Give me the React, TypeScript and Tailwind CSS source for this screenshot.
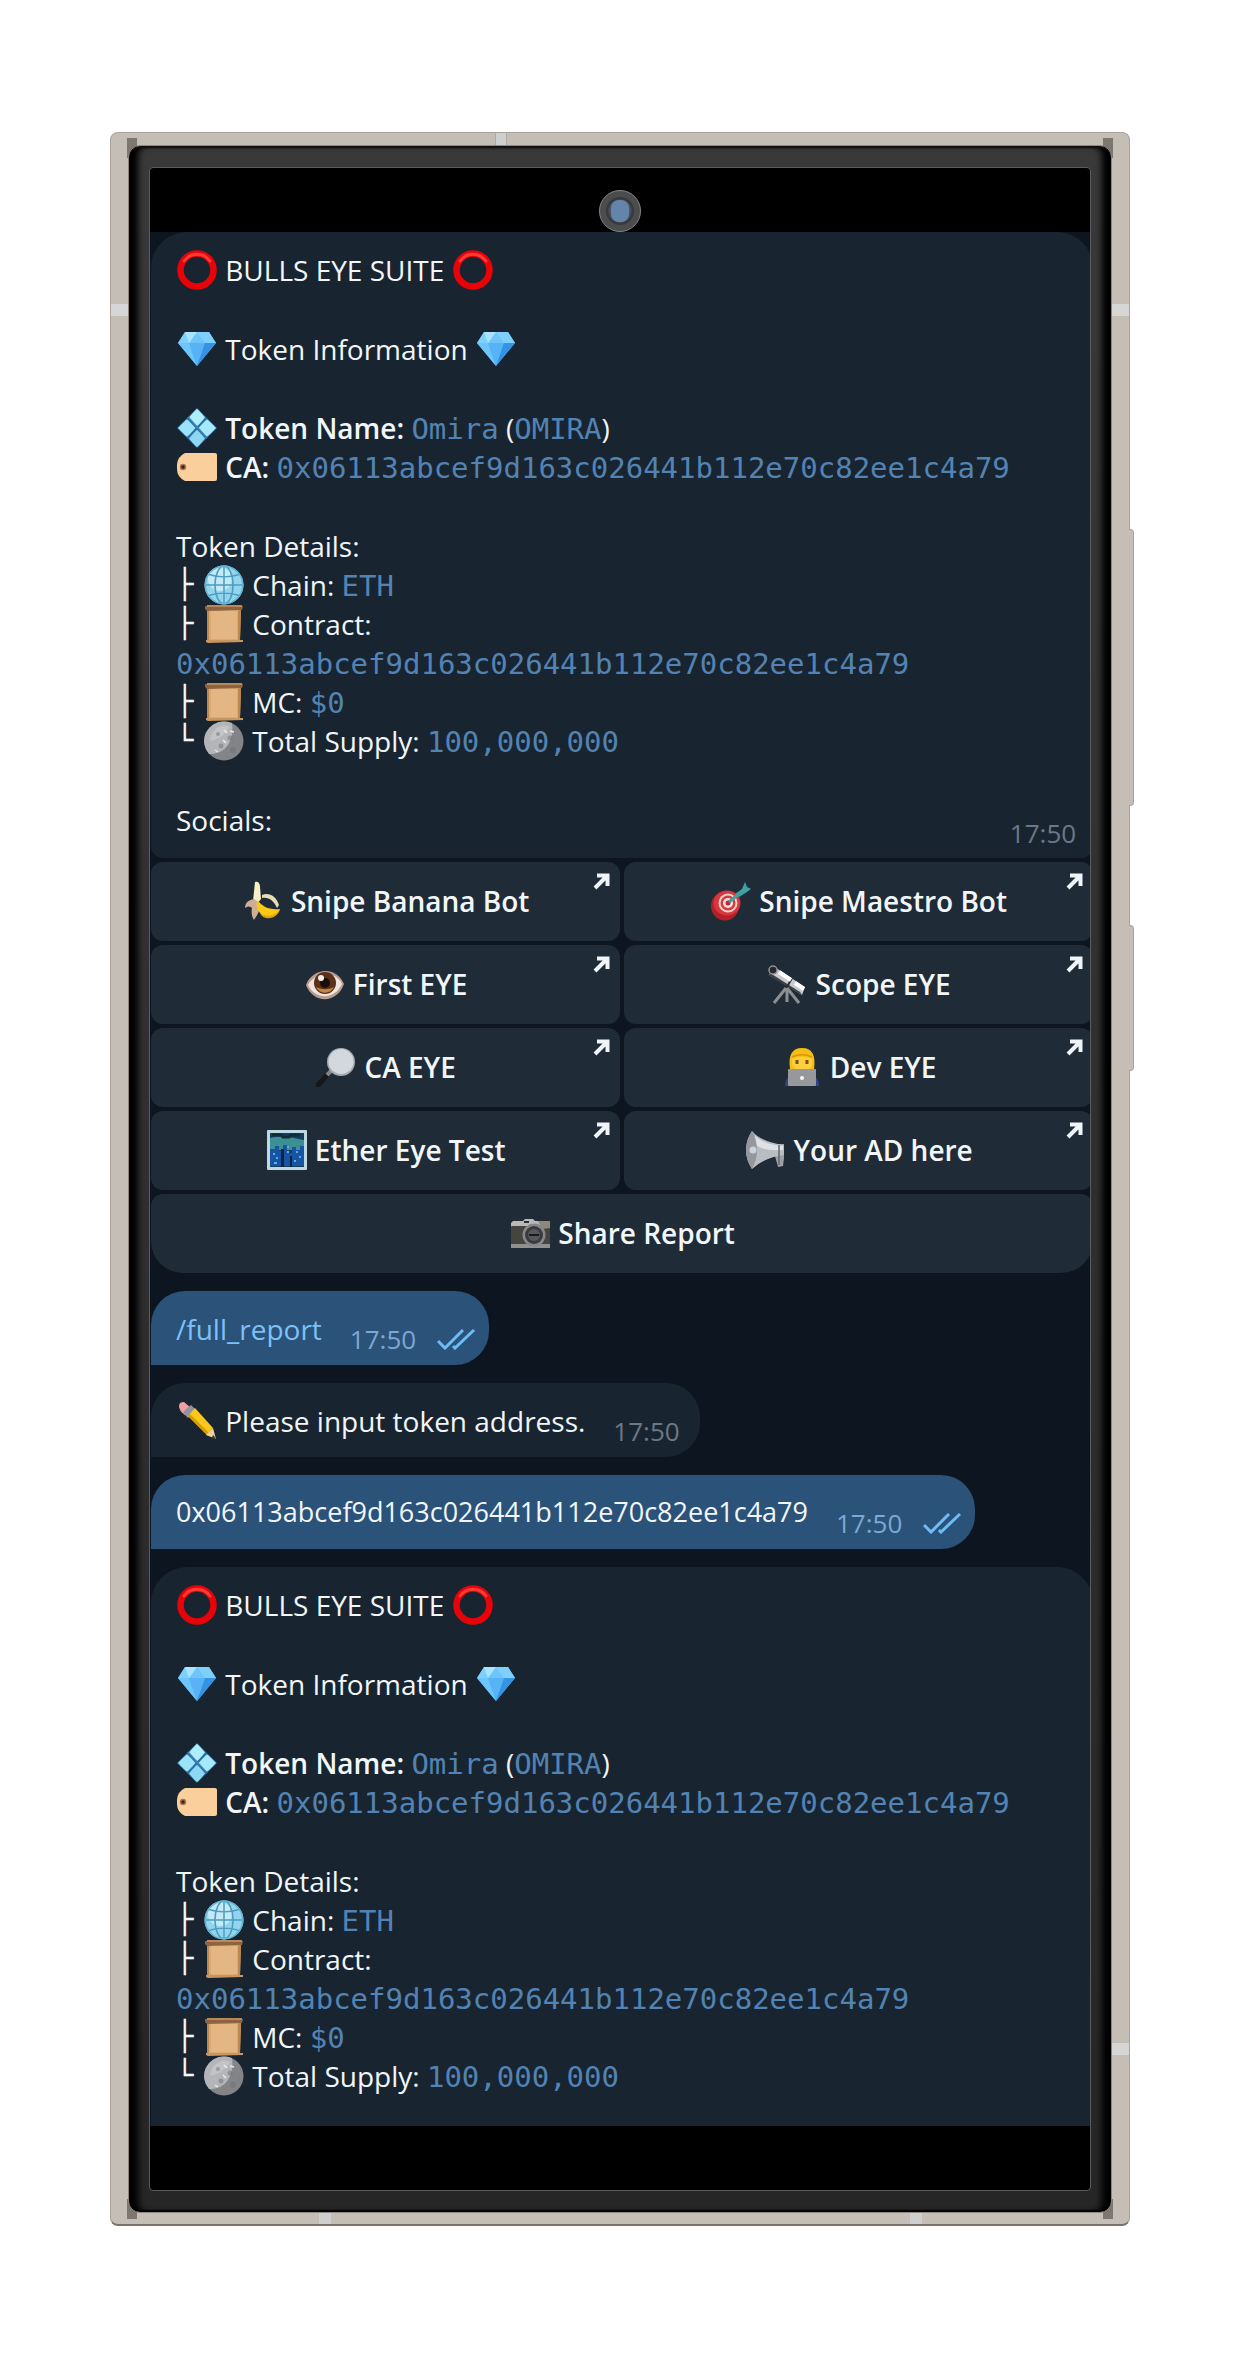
import type { ReactNode } from 'react';

const ADDRESS = '0x06113abcef9d163c026441b112e70c82ee1c4a79';

const glyphs: Record<string, ReactNode> = {
  ring: (
    <>
      <circle cx="20" cy="20" r="16.5" fill="none" stroke="#e80308" strokeWidth="6.500" />
      <path d="M7 11a16 16 0 0 1 26 0" fill="none" stroke="#ff3a34" strokeWidth="3" strokeLinecap="round" />
    </>
  ),
  gem: (
    <>
      <path d="M8 3h24l7 11-19 23L1 14z" fill="#4fb4f5" />
      <path d="M8 3h24l7 11H1z" fill="#7fcffb" />
      <path d="M1 14h11l8 23z" fill="#6cc6fb" />
      <path d="M12 14h16l-8 23z" fill="#58b3f6" />
      <path d="M28 14h11L20 37z" fill="#3593e4" />
      <path d="M12 14l8-11 8 11z" fill="#6fc4fa" />
      <path d="M8 3l4 11 8-11z" fill="#a8e4ff" />
    </>
  ),
  diamonds: (
    <>
      <path d="M20 0l20 20-20 20L0 20z" fill="#2a6ea8" />
      <path d="M20 1q1 0 8 8.500-7 8.500-8 8.500t-8-8.500Q19 1 20 1z" fill="#aeeefd" />
      <path d="M10 11.500q1 0 8.500 8.500-7.500 8.500-8.500 8.500T1 20q8-8.500 9-8.500z" fill="#9be3f8" />
      <path d="M30 11.500q1 0 9 8.500-8 8.500-9 8.500T21.500 20q7.500-8.500 8.500-8.500z" fill="#a5e9fa" />
      <path d="M20 22q1 0 8 8.500-7 8.500-8 8.500t-8-8.500Q19 22 20 22z" fill="#8cd8f3" />
      <path d="M11 9l19 21" stroke="#3f83b4" strokeWidth="1.500" />
    </>
  ),
  tag: (
    <>
      <path d="M8 6h30a2 2 0 0 1 2 2v24a2 2 0 0 1-2 2H8q-8-4-8-12v-4Q0 10 8 6z" fill="#fbcf9b" />
      <circle cx="6" cy="20" r="3.200" fill="#a9744c" />
      <circle cx="6" cy="20" r="1.800" fill="#3a241b" />
    </>
  ),
  globe: (
    <>
      <circle cx="20" cy="20" r="19.500" fill="#93d5ee" />
      <circle cx="16" cy="14" r="12" fill="#d5f2fb" opacity=".7" />
      <g fill="none" stroke="#4e9dc0" strokeWidth="1.500">
        <ellipse cx="20" cy="20" rx="9" ry="19" />
        <path d="M20 1v38M1 20h38M5 9.500c9 3 21 3 30 0M5 30.500c9-3 21-3 30 0" />
        <circle cx="20" cy="20" r="18.700" stroke="#62b4d2" />
      </g>
    </>
  ),
  scroll: (
    <>
      <path d="M3 4h34l-1 32H3z" fill="#dcaa73" />
      <path d="M7 7h26v28H7z" fill="#e4b683" />
      <path d="M3 5v31h2V7zM37 5l-1 31h-2V7z" fill="#bb8850" />
      <path d="M1 2h38l-1 4-35 1-2-2z" fill="#8d6340" />
      <path d="M3 1h35v2H3z" fill="#b98a59" />
      <path d="M2 36h37v2l-35 1-2-1z" fill="#c9965f" />
    </>
  ),
  moon: (
    <>
      <circle cx="20" cy="20" r="19.500" fill="#828488" />
      <path d="M20 .5A19.500 19.500 0 0 0 5 33C19 34 31 22 28 2A19 19 0 0 0 20 .5z" fill="#b3b5b8" />
      <path d="M8 12c6-8 14-9 18-6-3 6-10 12-20 14z" fill="#c9cbce" opacity=".7" />
      <g fill="#6f7175" opacity=".5">
        <circle cx="14" cy="13" r="2" />
        <circle cx="26" cy="17" r="2.500" />
        <circle cx="17" cy="25" r="2.500" />
        <circle cx="29" cy="29" r="3" />
      </g>
      <path d="M20 9l3 3M11 29l3 2M26 10l4 1M19 19l3 3" stroke="#e8e9eb" strokeWidth="1.500" />
    </>
  ),
  banana: (
    <>
      <path d="M12 1c3-1 5 1 5 5l1 12-5 6-3-4z" fill="#f8efc7" />
      <path d="M11 18c-6 1-9 4-9 9 3-2 5-2 7 0-1 5 0 9 2 12 3-5 7-10 6-17z" fill="#cfae98" />
      <path d="M19 14c6-3 14 0 17 10l-2 3c-3-7-8-11-15-10z" fill="#e8dcb6" />
      <path d="M14 19c6 7 12 10 23 9-3 9-15 10-20 4-3-4-4-8-3-13z" fill="#fbc913" />
      <path d="M17 32c6 5 16 3 20-4-3 11-17 12-20 4z" fill="#e0a50d" />
    </>
  ),
  target: (
    <>
      <ellipse cx="14" cy="25" rx="14" ry="14.500" fill="#b3202a" />
      <ellipse cx="16" cy="22" rx="13.500" ry="12.500" fill="#d8353f" />
      <circle cx="17" cy="22" r="9.500" fill="#f3d0c0" />
      <circle cx="17" cy="22" r="7.500" fill="#d63b45" />
      <circle cx="17" cy="22" r="5" fill="#f8e2de" />
      <circle cx="17" cy="22" r="2.500" fill="#c22630" />
      <path d="M18 21L34 8" stroke="#3aa3a5" strokeWidth="3" />
      <path d="M24 13l7-5 3-7 2 5 4 2-4 3-8 5z" fill="#3f9fa3" />
    </>
  ),
  eye: (
    <>
      <path d="M1 21C7 4 31 1 39 20 32 40 8 40 1 21z" fill="#b99c90" />
      <path d="M3 21C9 9 30 5 37 20 30 36 10 36 3 21z" fill="#f0e4de" />
      <circle cx="20" cy="19" r="11" fill="#5a2f1c" />
      <path d="M11 23a10 10 0 0 0 18 0c-6 3-12 3-18 0z" fill="#bf8a3d" />
      <circle cx="20" cy="19" r="5" fill="#1d0d0a" />
      <circle cx="16" cy="14" r="3" fill="#f5eee9" />
    </>
  ),
  telescope: (
    <>
      <path d="M19 24L7 39M20 24v14M20 24l12 15" stroke="#8d8f93" strokeWidth="3" />
      <path d="M6 2l32 21-3 8L2 11z" fill="#c9cbd0" />
      <path d="M3 9l30 19 2 3L2 12z" fill="#3c3f45" />
      <path d="M25 14l-5 9" stroke="#2b2e33" strokeWidth="2" />
      <circle cx="6" cy="6" r="4" fill="#25282d" stroke="#8d8f93" strokeWidth="1.500" />
      <path d="M12 8l12 8M28 19l9 6" stroke="#fff" strokeWidth="4" />
    </>
  ),
  magnifier: (
    <>
      <path d="M13 26L2 38" stroke="#15181b" strokeWidth="5" strokeLinecap="round" />
      <path d="M17 22l-6 6" stroke="#82868c" strokeWidth="4" />
      <circle cx="25" cy="15" r="14" fill="#a4abb3" />
      <circle cx="25" cy="14.500" r="12.500" fill="#d3d8df" />
    </>
  ),
  coder: (
    <>
      <path d="M3 39c0-9 6-12 17-12s17 3 17 12z" fill="#29478f" />
      <path d="M8 22C6 8 10 1 20 1s14 7 12 21z" fill="#f6bd12" />
      <path d="M10 12c7-3 13-3 20 0 1 8-3 12-10 12s-11-4-10-12z" fill="#ffcf3f" />
      <path d="M10 10c7-3 13-3 20 0" fill="none" stroke="#d79708" strokeWidth="1.500" />
      <path d="M15 13v4M25 13v4" stroke="#7b5119" strokeWidth="3" />
      <rect x="6" y="22" width="28" height="17" rx="1" fill="#97989c" />
      <circle cx="20" cy="31" r="2" fill="#f5f5f5" />
    </>
  ),
  city: (
    <>
      <rect width="40" height="40" rx="1" fill="#bcd9e4" />
      <rect x="3" y="3" width="34" height="34" fill="#173d5c" />
      <path d="M3 8c10-3 24 0 34 2v10H3z" fill="#3c8f94" />
      <path d="M3 19h5v-3h4v5h4v-6h4v8h5v-6h4v3h4v-4h4v20H3z" fill="#1754a4" />
      <path d="M14 19h3v18h-3zM23 26h2v11h-2z" fill="#0c2443" />
      <path d="M5 5h9l2 2h6l2-2h9" stroke="#0f2d35" strokeWidth="3" fill="none" />
      <path d="M6 24h2M9 28h2M20 17h2M20 22h2M29 22h2M32 27h2M27 31h2M7 33h3" stroke="#58b1e5" strokeWidth="2" />
    </>
  ),
  megaphone: (
    <>
      <path d="M31 14h8v14l-1 8-5 1-3-11z" fill="#9da1a7" />
      <path d="M7 1q9 11 32 14v10Q18 28 7 39 1 30 1 20T7 1z" fill="#b9bcc1" />
      <path d="M7 1Q1 10 1 20t6 19q5-9 5-19T7 1z" fill="#94979d" />
      <path d="M10 6q10 9 28 10v4q-18 1-26-4z" fill="#dfe1e4" />
      <path d="M34 15v20" stroke="#62666c" strokeWidth="1.500" />
      <circle cx="8" cy="20" r="3.500" fill="#cfd2d6" />
    </>
  ),
  camera: (
    <>
      <path d="M3 8h10l2-2h8l2 2h15v6H1v-4z" fill="#b9bab8" />
      <rect x="1" y="13" width="39" height="21" rx="1" fill="#45443f" />
      <rect x="1" y="31" width="39" height="4" fill="#8f9090" />
      <path d="M28 8h12v7l-8 1z" fill="#8d8878" />
      <circle cx="24" cy="22" r="11.500" fill="#86878a" />
      <circle cx="24" cy="22" r="9" fill="#3a3b3c" />
      <circle cx="24" cy="22" r="6" fill="#56595c" />
      <path d="M19 22h10" stroke="#191a1b" strokeWidth="2" />
      <path d="M4 6h6M14 9h5" stroke="#2b2c2d" strokeWidth="2" />
    </>
  ),
  pencil: (
    <>
      <path d="M2 5q0-4 5-4l7 6-6 7q-6-4-6-9z" fill="#f0a0a5" />
      <path d="M8 9l6-5 5 5-8 8-5-5z" fill="#8f939b" />
      <path d="M11 15l7-8 18 20-6 7z" fill="#fac81a" />
      <path d="M11 15l2-2 19 19-2 2z" fill="#d79b0b" />
      <path d="M36 27l3 11-10-4z" fill="#efcf9b" />
      <path d="M36.500 34l2.500 4-5-1z" fill="#3f3b37" />
    </>
  ),
};

const Emoji = ({ name }: { name: string }) => (
  <svg viewBox="0 0 40 40" className="mx-px size-10 shrink-0" aria-hidden="true">
    {glyphs[name]}
  </svg>
);

const Line = ({ children }: { children: ReactNode }) => (
  <div className="flex h-[39px] items-center whitespace-pre">{children}</div>
);

const Mono = ({ children }: { children: ReactNode }) => (
  <code className="font-['DejaVu_Sans_Mono',monospace] text-[29px] leading-none text-[#5383b3]">{children}</code>
);

const Branch = ({ children }: { children: string }) => (
  <span className="w-[27px] font-['DejaVu_Sans_Mono',monospace] text-[29px] leading-[39px]">{children}</span>
);

const Time = ({ sent = false }: { sent?: boolean }) => (
  <time className={`text-[26px] leading-8 ${sent ? 'text-[#7da8d3]' : 'text-[#6b7885]'}`}>17:50</time>
);

const ReportText = () => (
  <>
    <Line>
      <Emoji name="ring" />
      <span> BULLS EYE SUITE </span>
      <Emoji name="ring" />
    </Line>
    <Line>
      <Emoji name="gem" />
      <span> Token Information </span>
      <Emoji name="gem" />
    </Line>
    <div>
      <Line>
        <Emoji name="diamonds" />
        <span> <b className="font-semibold">Token Name:</b> <Mono>Omira</Mono> (<Mono>OMIRA</Mono>)</span>
      </Line>
      <Line>
        <Emoji name="tag" />
        <span> <b className="font-semibold">CA:</b> <Mono>{ADDRESS}</Mono></span>
      </Line>
    </div>
    <div>
      <Line>Token Details:</Line>
      <Line>
        <Branch>├</Branch>
        <Emoji name="globe" />
        <span> Chain: <Mono>ETH</Mono></span>
      </Line>
      <Line>
        <Branch>├</Branch>
        <Emoji name="scroll" />
        <span> Contract:</span>
      </Line>
      <Line>
        <span><Mono>{ADDRESS}</Mono></span>
      </Line>
      <Line>
        <Branch>├</Branch>
        <Emoji name="scroll" />
        <span> MC: <Mono>$0</Mono></span>
      </Line>
      <Line>
        <Branch>└</Branch>
        <Emoji name="moon" />
        <span> Total Supply: <Mono>100,000,000</Mono></span>
      </Line>
    </div>
  </>
);

const links = [
  { icon: 'banana', label: 'Snipe Banana Bot' },
  { icon: 'target', label: 'Snipe Maestro Bot' },
  { icon: 'eye', label: 'First EYE' },
  { icon: 'telescope', label: 'Scope EYE' },
  { icon: 'magnifier', label: 'CA EYE' },
  { icon: 'coder', label: 'Dev EYE' },
  { icon: 'city', label: 'Ether Eye Test' },
  { icon: 'megaphone', label: 'Your AD here' },
];

const Keyboard = () => (
  <div className="mt-1 grid grid-cols-2 gap-1 font-semibold">
    {links.map((link) => (
      <button
        key={link.label}
        className="relative flex h-[79px] items-center justify-center rounded-xl bg-[#1f2c38] pb-0.5 whitespace-pre"
      >
        <Emoji name={link.icon} />
        <span> {link.label}</span>
        <svg viewBox="0 0 17 17" className="absolute top-[11px] right-[10px] size-[17px]" aria-hidden="true">
          <path d="M4 2.500h10.500V13M14 3L2 15" fill="none" stroke="#eef4f8" strokeWidth="4" />
        </svg>
      </button>
    ))}
    <button className="col-span-2 flex h-[79px] items-center justify-center rounded-xl rounded-b-[32px] bg-[#1f2c38] pb-0.5 whitespace-pre">
      <Emoji name="camera" />
      <span> Share Report</span>
    </button>
  </div>
);

const Bubble = ({ sent = false, children }: { sent?: boolean; children: ReactNode }) => (
  <div
    className={`mt-[18px] flex w-fit items-end rounded-[34px] rounded-bl-none pt-[18px] pb-[10px] pl-[25px] ${
      sent ? 'bg-[#2b5278] pr-[14px]' : 'bg-[#182531] pr-5'
    }`}
  >
    <div className="mr-7 mb-[7px]">
      <Line>{children}</Line>
    </div>
    <Time sent={sent} />
    {sent && (
      <svg viewBox="0 0 38 22" className="mb-[5px] ml-[21px] h-[22px] w-[38px]" aria-label="Read">
        <path d="M1 13l7 7L26 2M16 18l2 2L37 2" fill="none" stroke="#6fbcf5" strokeWidth="3" />
      </svg>
    )}
  </div>
);

const Chat = () => (
  <main className="overflow-hidden bg-[#0d1620] pl-px text-[28px] text-[#f2f6f9]">
    <div className="-mr-[3px]">
      <article className="flex items-end justify-between rounded-t-[36px] rounded-b-xl bg-[#182531] pt-[18px] pr-5 pb-[9px] pl-[25px]">
        <div className="mb-[10px] flex flex-col gap-10">
          <ReportText />
          <Line>Socials:</Line>
        </div>
        <Time />
      </article>
      <Keyboard />
      <Bubble sent>
        <a href="#report" className="text-[#7cc1f7]">/full_report</a>
      </Bubble>
      <Bubble>
        <Emoji name="pencil" />
        <span> Please input token address.</span>
      </Bubble>
      <Bubble sent>
        <span className="text-[27px]">{ADDRESS}</span>
      </Bubble>
      <article className="mt-[18px] flex flex-col gap-10 rounded-t-[36px] bg-[#182531] pt-[18px] pb-[31px] pl-[25px]">
        <ReportText />
      </article>
    </div>
  </main>
);

// Antenna seams, corner shadows and side keys drawn over the metal rim
const Rim = () => (
  <>
    <i className="absolute top-0 left-[384px] h-[13px] w-3 border-x border-[#aeaaa5] bg-[#cfcfcf]" />
    <i className="absolute top-[171px] left-0 h-3 w-[17px] bg-[#d6d6d6]" />
    <i className="absolute top-[171px] right-0 h-3 w-[17px] bg-[#d6d6d6]" />
    <i className="absolute right-0 bottom-[169px] h-3 w-[17px] bg-[#d6d6d6]" />
    <i className="absolute bottom-0 left-[208px] h-[13px] w-3 bg-[#cfcfcf]" />
    <i className="absolute right-[207px] bottom-0 h-[13px] w-3 bg-[#cfcfcf]" />
    <i className="absolute top-[5px] left-4 h-5 w-[10px] bg-[#7d7770]" />
    <i className="absolute top-[5px] right-4 h-5 w-[10px] bg-[#7d7770]" />
    <i className="absolute bottom-[5px] left-4 h-5 w-[10px] bg-[#7d7770]" />
    <i className="absolute right-4 bottom-[5px] h-5 w-[10px] bg-[#7d7770]" />
    <i className="absolute top-[396px] -right-[5px] h-[277px] w-[5px] rounded-r-sm border border-l-0 border-[#a8a29a] bg-[#c4beb6]" />
    <i className="absolute top-[792px] -right-[5px] h-[146px] w-[5px] rounded-r-sm border border-l-0 border-[#a8a29a] bg-[#c4beb6]" />
  </>
);

export default function App() {
  return (
    <div className="bg-white pt-[132px] pr-[115px] pb-[133px] pl-[110px] font-['Open_Sans',sans-serif]">
      <div className="relative rounded-lg border border-b-2 border-[#a8a29a] border-b-[#7a736c] bg-[#c4beb6] px-[17px] pt-3 pb-[11px]">
        <Rim />
        <div className="relative rounded-xl border border-[#8d8780] bg-linear-to-b from-[#393939] to-[#262626] px-5 py-[21px] shadow-[inset_0_2px_1px_#111,inset_0_-2px_1px_#000,inset_11px_0_6px_-2px_#000,inset_-11px_0_6px_-2px_#000]">
          <div className="overflow-hidden rounded border border-[#5c5c5c] bg-black">
            <div className="flex h-16 items-end justify-center">
              <svg viewBox="0 0 42 42" className="size-[42px]" aria-hidden="true">
                <circle cx="21" cy="21" r="20.500" fill="#4b4c4e" stroke="#858585" />
                <circle cx="21" cy="21" r="14" fill="#37393c" />
                <circle cx="21" cy="21" r="11.500" fill="#4a535d" />
                <rect x="12" y="10" width="18" height="22" rx="8" fill="#6485aa" />
              </svg>
            </div>
            <Chat />
            <div className="h-16" />
          </div>
        </div>
      </div>
    </div>
  );
}
